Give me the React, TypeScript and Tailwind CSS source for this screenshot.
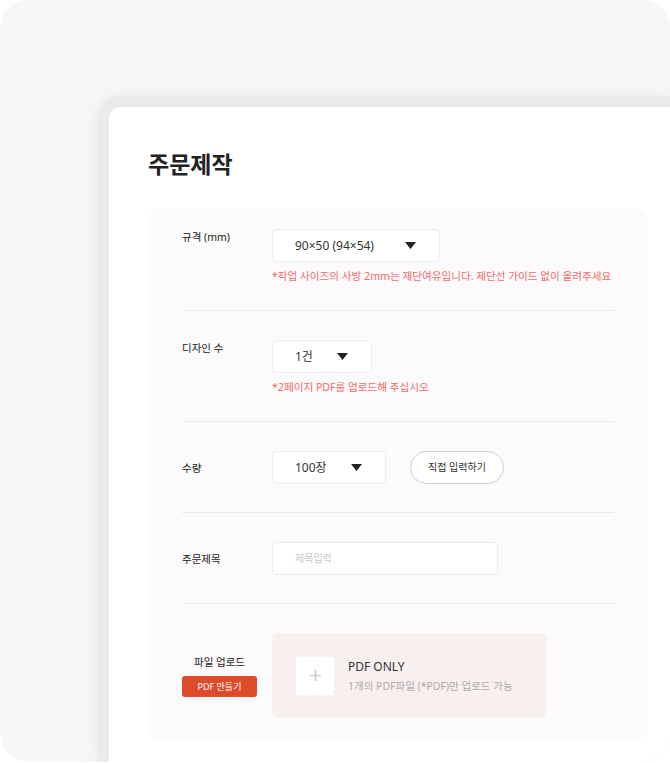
import type { ReactNode } from 'react';

const FONT = { fontFamily: '"Noto Sans", "Noto Sans CJK KR", sans-serif' };

function Caret() {
  return (
    <svg width="11" height="7" viewBox="0 0 11 7" className="shrink-0">
      <path d="M0 0 H11 L5.5 7 Z" fill="#222" />
    </svg>
  );
}

function SelectBox({ value, width }: { value: string; width: string }) {
  return (
    <div
      className={`${width} h-[33px] bg-white border border-[#ececec] rounded-[4px] flex items-center justify-between pl-[22px] pr-[23px] text-[12px] text-[#333]`}
    >
      <span>{value}</span>
      <Caret />
    </div>
  );
}

function Row({
  label,
  children,
  first,
  top,
}: {
  label: string;
  children: ReactNode;
  first?: boolean;
  top?: boolean;
}) {
  return (
    <div
      className={`flex ${top ? 'items-start pb-[26px]' : 'items-center pb-[28px]'} ${first ? 'pt-[21px]' : 'pt-[29px]'} border-b border-[#ebe9e9]`}
    >
      <div className="w-[90px] shrink-0 text-[10.5px] text-[#222] leading-[16px]">{label}</div>
      <div className="flex-1">{children}</div>
    </div>
  );
}

function Note({ children }: { children: ReactNode }) {
  return <p className="mt-[6px] text-[10.6px] leading-[16px] text-[#f26a6a] whitespace-nowrap">{children}</p>;
}

export default function App() {
  return (
    <div className="w-[670px] h-[763px] bg-white" style={FONT}>
      <div className="h-[762px] bg-[#f7f7f7] rounded-[28px] overflow-hidden pl-[97px] pt-[96px]">
        <div className="h-full bg-[#ebebeb] rounded-tl-[22px] pl-[12px] pt-[11px] shadow-[0_0_22px_rgba(0,0,0,0.06)]">
          <div className="h-full bg-white rounded-tl-[12px] pl-[39px] pt-[41px] pr-[22px]">
            <h1 className="text-[23px] leading-[32px] font-bold text-[#222] mb-[28px]">주문제작</h1>

            <div className="w-[500px] bg-[#fcfafa] rounded-[12px] px-[34px] pb-[22px]">
              <Row label="규격 (mm)" first top>
                <SelectBox value="90×50 (94×54)" width="w-[168px]" />
                <Note>*작업 사이즈의 사방 2mm는 재단여유입니다. 제단선 가이드 없이 올려주세요</Note>
              </Row>

              <Row label="디자인 수" top>
                <SelectBox value="1건" width="w-[100px]" />
                <Note>*2페이지 PDF를 업로드해 주십시오</Note>
              </Row>

              <Row label="수량">
                <div className="flex items-center gap-[24px]">
                  <SelectBox value="100장" width="w-[114px]" />
                  <button className="w-[94px] h-[33px] rounded-full border border-[#cfcfcf] bg-white text-[10px] text-[#333]">
                    직접 입력하기
                  </button>
                </div>
              </Row>

              <Row label="주문제목">
                <div className="w-[226px] h-[33px] bg-white border border-[#ececec] rounded-[4px] flex items-center pl-[22px] text-[10px] text-[#c8c8c8]">
                  제목입력
                </div>
              </Row>

              <div className="flex items-center pt-[29px]">
                <div className="w-[90px] shrink-0">
                  <div className="w-[75px] flex flex-col items-center">
                    <span className="text-[10.5px] leading-[16px] text-[#222]">파일 업로드</span>
                    <button className="mt-[6px] w-[75px] h-[21px] rounded-[3px] bg-[#dd4b2b] text-white text-[9px]">
                      PDF 만들기
                    </button>
                  </div>
                </div>
                <div className="w-[274px] h-[85px] bg-[#f7f0ef] rounded-[6px] flex items-center pl-[23px]">
                  <div className="w-[40px] h-[40px] bg-white border border-dashed border-[#eeeeee] rounded-[3px] flex items-center justify-center">
                    <svg width="11" height="11" viewBox="0 0 11 11">
                      <path d="M5.5 0 V11 M0 5.5 H11" stroke="#c9c9c9" strokeWidth="1.6" />
                    </svg>
                  </div>
                  <div className="ml-[13px]">
                    <div className="text-[12px] leading-[18px] text-[#333]">PDF ONLY</div>
                    <div className="mt-[2px] text-[10.5px] leading-[16px] text-[#b0a9a9]">1개의 PDF파일 (*PDF)만 업로드 가능</div>
                  </div>
                </div>
              </div>
            </div>
          </div>
        </div>
      </div>
    </div>
  );
}
